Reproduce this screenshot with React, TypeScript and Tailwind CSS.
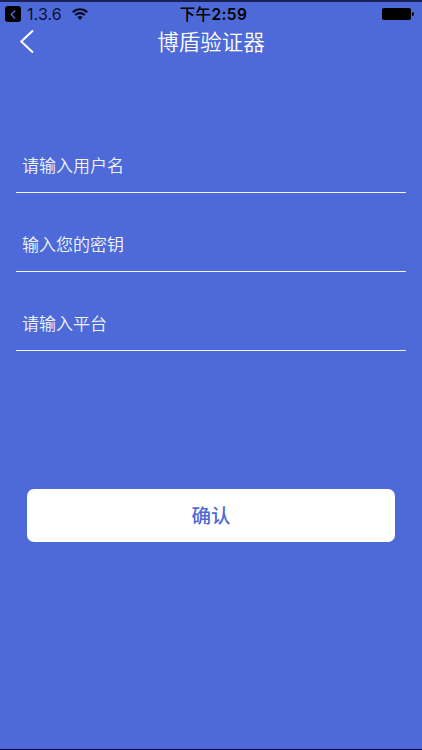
import React from 'react';

interface Field {
  name: string;
  placeholder: string;
}

const fields: Field[] = [
  { name: 'username', placeholder: '请输入用户名' },
  { name: 'secret', placeholder: '输入您的密钥' },
  { name: 'platform', placeholder: '请输入平台' },
];

const WifiIcon: React.FC = () => (
  <svg viewBox="0 0 16 12" className="ml-[10px] h-3 w-4" fill="none" stroke="#060a20" strokeWidth="2.1">
    <path d="M0.7 4.3a10.4 10.4 0 0 1 14.6 0" />
    <path d="M3.2 7.1a6.8 6.8 0 0 1 9.6 0" />
    <path d="M8 12 5.4 9.2a3.8 3.8 0 0 1 5.2 0Z" fill="#060a20" stroke="none" />
  </svg>
);

const StatusBar: React.FC = () => (
  <div className="grid h-6 grid-cols-3 items-center text-[#0b1030]">
    <div className="flex items-center pl-[5px]">
      <span className="flex h-4 w-4 items-center justify-center rounded-[3px] bg-black">
        <svg viewBox="0 0 6 10" className="h-[9px] w-[6px]" fill="none" stroke="#4d6ad8" strokeWidth="1.5">
          <path d="M5.3 0.6 1 5l4.3 4.4" />
        </svg>
      </span>
      <span className="ml-[6px] text-[16px] leading-none tracking-[0.1px]">1.3.6</span>
      <WifiIcon />
    </div>
    <div className="whitespace-nowrap pl-[5px] pt-[2px] text-center text-[15.5px] leading-none tracking-[0.4px] text-black">
      <span className="font-medium">下午</span>
      <span className="font-semibold">2:59</span>
    </div>
    <div className="flex items-center justify-end pr-2">
      <span className="h-3 w-[29px] rounded-[2px] bg-black" />
      <span className="ml-[1px] h-1 w-[2px] rounded-r-full bg-black" />
    </div>
  </div>
);

const Header: React.FC = () => (
  <header className="grid h-[30px] grid-cols-[60px_1fr_60px] items-center text-white">
    <button type="button" className="flex pl-5" aria-label="返回">
      <svg viewBox="0 0 14 24" className="h-6 w-[14px]" fill="none" stroke="white" strokeWidth="2">
        <path d="M13 1.5 1.3 12.5 13 23.5" />
      </svg>
    </button>
    <h1 className="pt-[3px] text-center text-[21.5px] font-[350] leading-none">博盾验证器</h1>
  </header>
);

const App: React.FC = () => {
  return (
    <div className="flex h-[750px] w-[422px] flex-col border-b border-t-2 border-b-[#05093f] border-t-[#1a2058] bg-[#4d6ad8] font-['Inter','Noto_Sans_CJK_SC',sans-serif]">
      <StatusBar />
      <Header />

      <form className="flex flex-1 flex-col">
        <div className="px-4 pt-[58px]">
          {fields.map((field) => (
            <div key={field.name} className="flex h-[79px] flex-col justify-end">
              <input
                name={field.name}
                placeholder={field.placeholder}
                className="h-[54px] w-full border-b border-[#f3f5fd] bg-transparent px-[6px] text-[17px] font-[350] text-white outline-none placeholder:text-[#f3f5fd]"
              />
            </div>
          ))}
        </div>

        <button
          type="button"
          className="mx-[27px] mt-[138px] h-[53px] rounded-[7px] bg-white pt-[2px] text-[19.5px] font-medium text-[#4d6ad8]"
        >
          确认
        </button>
      </form>
    </div>
  );
};

export default App;
